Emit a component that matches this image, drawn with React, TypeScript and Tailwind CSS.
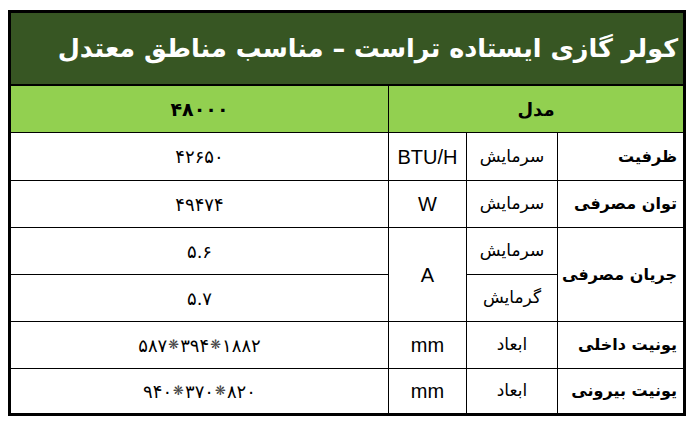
import React from "react";

const fa = { fontFamily: '"DejaVu Sans", sans-serif' };
const lat = { fontFamily: '"Liberation Sans", Arial, sans-serif' };

const Cell = ({ children, className = "" }: { children?: React.ReactNode; className?: string }) => (
  <div className={`bg-white flex items-center justify-center text-black whitespace-nowrap ${className}`}>{children}</div>
);

const Label = ({ text, className = "" }: { text: string; className?: string }) => (
  <Cell className={`justify-start pr-[6px] font-bold text-[16px] ${className}`}>
    <span style={fa}>{text}</span>
  </Cell>
);

const Sub = ({ text }: { text: string }) => (
  <Cell className="text-[17px]">
    <span style={fa}>{text}</span>
  </Cell>
);

const Unit = ({ text, className = "" }: { text: string; className?: string }) => (
  <Cell className={`text-[20px] ${className}`}>
    <span style={lat}>{text}</span>
  </Cell>
);

const Value = ({ parts }: { parts: string[] }) => (
  <Cell className="text-[18px]">
    <span dir="ltr" style={fa} className="flex items-center">
      {parts.map((p, i) => (
        <React.Fragment key={i}>
          {i > 0 && <span className="text-[13px] text-[#444] px-[1px]">❋</span>}
          <span>{p}</span>
        </React.Fragment>
      ))}
    </span>
  </Cell>
);

const App = () => {
  return (
    <div className="w-[699px] h-[428px] bg-white pt-[10px] pl-[8px]">
      <div
        dir="rtl"
        className="w-[678px] border-[3px] border-black bg-black grid gap-px grid-cols-[125px_90px_77px_377px] grid-rows-[72px_46px_47px_46px_46px_46px_46px_44px]"
      >
        <div className="col-span-4 bg-[#375623] flex items-center justify-start pr-[5px] border-b border-black">
          <span className="text-white font-bold text-[25.5px] whitespace-nowrap" style={fa}>
            کولر گازی ایستاده تراست – مناسب مناطق معتدل
          </span>
        </div>

        <div className="col-span-3 bg-[#92d050] flex items-center justify-center">
          <span className="font-bold text-[18px]" style={fa}>
            مدل
          </span>
        </div>
        <div className="bg-[#92d050] flex items-center justify-center">
          <span className="font-bold text-[19px]" style={fa}>
            ۴۸۰۰۰
          </span>
        </div>

        <Label text="ظرفیت" />
        <Sub text="سرمایش" />
        <Unit text="BTU/H" />
        <Value parts={["۴۲۶۵۰"]} />

        <Label text="توان مصرفی" />
        <Sub text="سرمایش" />
        <Unit text="W" />
        <Value parts={["۴۹۴۷۴"]} />

        <Label text="جریان مصرفی" className="row-span-2" />
        <Sub text="سرمایش" />
        <Unit text="A" className="row-span-2" />
        <Value parts={["۵.۶"]} />
        <Sub text="گرمایش" />
        <Value parts={["۵.۷"]} />

        <Label text="یونیت داخلی" />
        <Sub text="ابعاد" />
        <Unit text="mm" />
        <Value parts={["۵۸۷", "۳۹۴", "۱۸۸۲"]} />

        <Label text="یونیت بیرونی" />
        <Sub text="ابعاد" />
        <Unit text="mm" />
        <Value parts={["۹۴۰", "۳۷۰", "۸۲۰"]} />
      </div>
    </div>
  );
};

export default App;
